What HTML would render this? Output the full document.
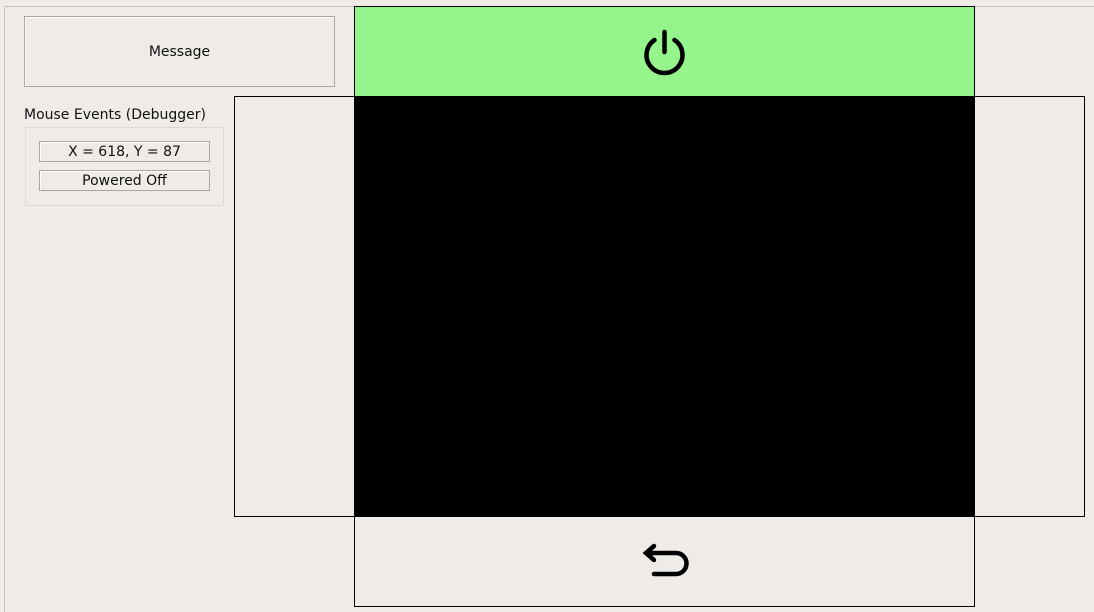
<!DOCTYPE html>
<html><head><style>
html,body{margin:0;width:1094px;height:612px;overflow:hidden}
body{background:#efebe7;position:relative;font-family:"DejaVu Sans","Liberation Sans",sans-serif;font-size:14px;color:#111}
div{position:absolute;box-sizing:border-box}
.frame{left:4px;top:6px;width:1090px;height:606px;border-left:1px solid #c8c4bf;border-top:1px solid #c8c4bf}
.msg{left:24px;top:16px;width:311px;height:71px;border:1px solid #aaa6a2;box-shadow:inset 1px 1px 0 #fff;display:flex;align-items:center;justify-content:center}
.lbl{left:24px;top:107px}
.grp{left:25px;top:127px;width:199px;height:79px;border:1px solid #dcd8d3}
.f{left:39px;width:171px;height:21px;border:1px solid #a9a5a0;box-shadow:inset 1px 1px 0 #fff;display:flex;align-items:center;justify-content:center}
</style></head><body>
<div class="frame"></div>
<div class="msg">Message</div>
<div class="lbl">Mouse Events (Debugger)</div>
<div class="grp"></div>
<div class="f" style="top:141px">X = 618, Y = 87</div>
<div class="f" style="top:170px">Powered Off</div>
<div style="left:234px;top:96px;width:851px;height:421px;border:1px solid #000"></div>
<div style="left:354px;top:6px;width:621px;height:91px;background:#96f48d;border:1px solid #000"></div>
<div style="left:354px;top:96px;width:621px;height:421px;background:#000"></div>
<div style="left:354px;top:516px;width:621px;height:91px;border:1px solid #000"></div>
<svg style="position:absolute;left:0;top:0" width="1094" height="612">
<g fill="none" stroke="#000" stroke-width="4.5" stroke-linecap="round">
<path d="M654.5 40 A18 18 0 1 0 674.5 40"/>
<path d="M664.5 32 V52"/>
<path d="M648 553 H676 A10.5 10.5 0 0 1 676 574 H654"/>
<path d="M654 546 L646 553 L654 560"/>
</g>
</svg>
</body></html>
